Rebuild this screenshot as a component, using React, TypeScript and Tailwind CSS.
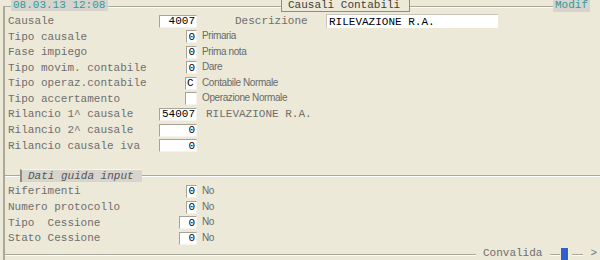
import React from "react";

const mono = "font-['Liberation_Mono','Courier_New',monospace]";
const sans = "font-['Liberation_Sans',Arial,sans-serif]";

function Box({ w, value, align = "right" }: { w: number; value: string; align?: "right" | "left" }) {
  return (
    <div
      className={`h-[13px] bg-white border-t border-l border-[#a5a39a] border-b border-r border-b-[#f4f3ee] border-r-[#f4f3ee] text-[11px] leading-[12px] text-black ${mono} flex items-center ${align === "right" ? "justify-end pr-[1px]" : "justify-start pl-[1px]"}`}
      style={{ width: w }}
    >
      {value}
    </div>
  );
}

function Row({
  label,
  h,
  box,
  boxW,
  note,
  noteMono,
  align,
}: {
  label: string;
  h: number;
  box: string;
  boxW: number;
  note?: string;
  noteMono?: boolean;
  align?: "right" | "left";
}) {
  return (
    <div className="flex items-center" style={{ height: h }}>
      <div className="w-[192px] flex items-center justify-between pl-[3px]">
        <span className={`${mono} text-[11px] leading-[12px] text-[#6e6e6e] whitespace-pre`}>{label}</span>
        <Box w={boxW} value={box} align={align} />
      </div>
      {note &&
        (noteMono ? (
          <span className={`${mono} text-[11px] leading-[12px] text-[#6e6e6e] ml-[9px] whitespace-pre`}>{note}</span>
        ) : (
          <span className={`${sans} text-[10px] leading-[11px] tracking-[-0.4px] text-[#6a6a6a] ml-[5px] -mt-[2px]`}>{note}</span>
        ))}
    </div>
  );
}

export default function App() {
  return (
    <div className="w-[600px] h-[260px] bg-[#ECE9D8] flex flex-col overflow-hidden">
      {/* header */}
      <div className="flex items-start h-[13px] shrink-0">
        <div className="w-[3px]" />
        <div className="w-[8px] h-[7px] mt-[6px] border-t border-l-2 border-[#aca899]" />
        <div className={`w-[97px] h-[11px] bg-[#d6d4cc] ${mono} text-[11px] leading-[10px] text-[#2f9a9a] pl-[2px] whitespace-pre`}>
          08.03.13 12:08
        </div>
        <div className="w-[173px] mt-[6px] border-t border-[#aca899] border-b border-b-white" />
        <div className={`w-[129px] h-[12px] border-l border-r border-b border-[#8f8d82] ${mono} text-[11px] leading-[11px] text-[#3e3e3e] pl-[6px] whitespace-pre`}>
          Causali Contabili
        </div>
        <div className="flex-1 mt-[6px] border-t border-[#aca899] border-b border-b-white" />
        <div className={`w-[37px] h-[12px] bg-[#d6d4cc] ${mono} text-[11px] leading-[11px] text-[#2f9a9a] pl-[2px]`}>
          Modif
        </div>
        <div className="w-[10px]" />
      </div>

      {/* body */}
      <div className="flex-1 ml-[3px] border-l-2 border-[#aca899] flex flex-col">
        {/* Causale row */}
        <div className="flex items-center h-[16px]">
          <div className="w-[192px] flex items-center justify-between pl-[3px]">
            <span className={`${mono} text-[11px] leading-[12px] text-[#6e6e6e]`}>Causale</span>
            <Box w={38} value="4007" />
          </div>
          <span className={`${mono} text-[11px] leading-[12px] text-[#6e6e6e] ml-[38px] w-[91px]`}>Descrizione</span>
          <div
            className={`w-[172px] h-[14px] bg-white border-t border-l border-[#c8c6bc] ${mono} text-[11px] leading-[12px] text-black pl-[2px] flex items-center whitespace-pre`}
          >
            RILEVAZIONE R.A.
          </div>
        </div>
        <Row label="Tipo causale" h={15} box="0" boxW={11} note="Primaria" />
        <Row label="Fase impiego" h={16} box="0" boxW={11} note="Prima nota" />
        <Row label="Tipo movim. contabile" h={15} box="0" boxW={11} note="Dare" />
        <Row label="Tipo operaz.contabile" h={16} box="C" boxW={12} note="Contabile Normale" align="left" />
        <Row label="Tipo accertamento" h={15} box="" boxW={12} note="Operazione Normale" />
        <Row label="Rilancio 1^ causale" h={16} box="54007" boxW={38} note="RILEVAZIONE R.A." noteMono />
        <Row label="Rilancio 2^ causale" h={16} box="0" boxW={38} />
        <Row label="Rilancio causale iva" h={15} box="0" boxW={38} />

        <div className="h-[16px]" />

        {/* section header */}
        <div className="flex items-start h-[14px]">
          <div className="w-[15px] mt-[6px] border-t border-[#aca899] border-b border-b-white" />
          <div
            className={`w-[122px] h-[13px] bg-[#d6d4cc] border-l-2 border-t border-[#8f8d82] border-t-[#f4f3ee] ${mono} italic text-[11px] leading-[12px] text-[#555] pl-[6px] whitespace-pre`}
          >
            Dati guida input
          </div>
          <div className="flex-1 mt-[6px] border-t border-[#aca899] border-b border-b-white" />
        </div>

        <Row label="Riferimenti" h={16} box="0" boxW={11} note="No" />
        <Row label="Numero protocollo" h={16} box="0" boxW={11} note="No" />
        <Row label="Tipo  Cessione" h={15} box="0" boxW={18} note="No" />
        <Row label="Stato Cessione" h={16} box="0" boxW={18} note="No" />

        {/* footer */}
        <div className="flex items-center h-[16px]">
          <div className="w-[471px] border-t border-[#aca899] border-b border-b-white mt-[1px]" />
          <span className={`${mono} text-[11px] leading-[12px] text-[#6e6e6e] ml-[7px] mt-[-2px]`}>Convalida</span>
          <div className="w-[10px] ml-[8px] border-t border-[#aca899] border-b border-b-white mt-[1px]" />
          <div className="w-[9px] h-[12px] bg-[#2d5fd0] border-r-2 border-[#f3f1c8] ml-[1px]" />
          <div className="w-[11px] ml-[2px] border-t border-[#aca899] border-b border-b-white mt-[1px]" />
          <span className={`${mono} text-[11px] leading-[12px] text-[#777] ml-[7px] mt-[-2px]`}>&gt;</span>
        </div>
      </div>
    </div>
  );
}
